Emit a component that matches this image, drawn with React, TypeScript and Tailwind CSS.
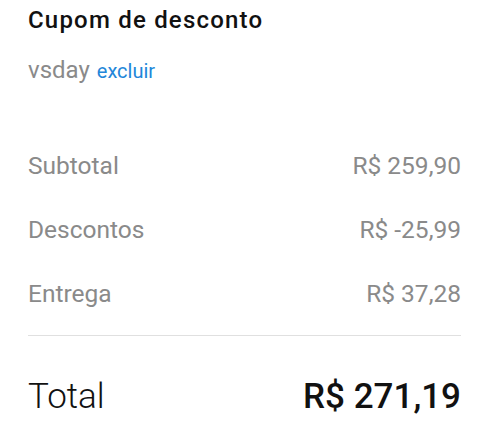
import React from 'react';

type Row = { label: string; value: string };

const rows: Row[] = [
  { label: 'Subtotal', value: 'R$ 259,90' },
  { label: 'Descontos', value: 'R$ -25,99' },
  { label: 'Entrega', value: 'R$ 37,28' },
];

const App = () => {
  return (
    <div className="w-[500px] bg-white pl-[28px] pr-[39px] font-['Roboto',sans-serif]">
      {/* coupon */}
      <div className="pt-[6px]">
        <h2 className="text-[24px] leading-[28px] font-medium tracking-[1.2px] text-[#111]">
          Cupom de desconto
        </h2>
        <div className="mt-[22px] flex items-baseline gap-[7px] leading-[28px]">
          <span className="text-[24px] text-[#8a8a8a]">vsday</span>
          <button className="text-[20px] text-[#2286d9]">excluir</button>
        </div>
      </div>

      {/* summary */}
      <div className="mt-[67px] flex flex-col gap-[36px]">
        {rows.map((row) => (
          <div key={row.label} className="flex items-baseline justify-between text-[24.5px] leading-[28px] text-[#8a8a8a]">
            <span>{row.label}</span>
            <span>{row.value}</span>
          </div>
        ))}
      </div>

      <div className="mt-[27px] h-px bg-[#e0e0e0]" />

      <div className="mt-[41px] flex items-baseline justify-between leading-[40px] text-[#111]">
        <span className="text-[35px] font-light">Total</span>
        <span className="text-[35px] font-medium">R$ 271,19</span>
      </div>
    </div>
  );
};

export default App;
